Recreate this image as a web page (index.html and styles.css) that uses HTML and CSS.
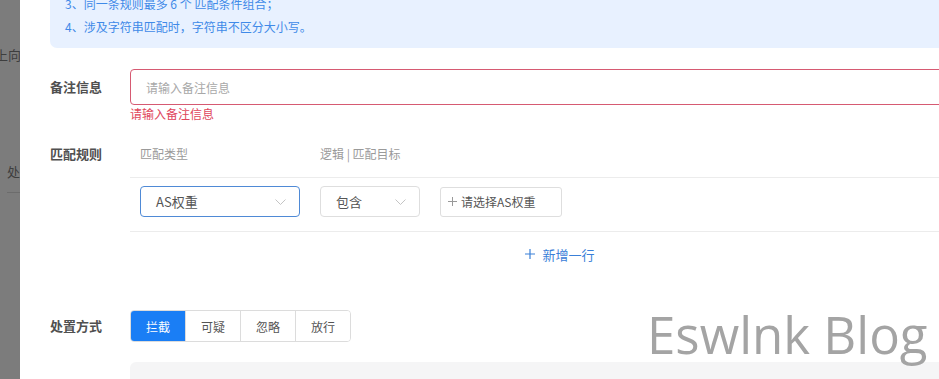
FILE: index.html
```html
<!DOCTYPE html>
<html lang="zh-CN">
<head>
    <meta charset="UTF-8">
    <meta name="viewport" content="width=device-width, initial-scale=1.0">
    <title>规则配置</title>
    <link rel="stylesheet" href="styles.css">
</head>
<body>
    <div class="page">
        <div class="backdrop">
            <div class="bd-text bd-top">上向</div>
            <div class="bd-text bd-mid">处</div>
        </div>

        <div class="drawer">
            <div class="tips">
                <p>3、同一条规则最多 6 个 匹配条件组合；</p>
                <p>4、涉及字符串匹配时，字符串不区分大小写。</p>
            </div>

            <div class="form-item item-remark">
                <label class="form-label">备注信息</label>
                <div class="form-control">
                    <input class="text-input is-error" type="text" placeholder="请输入备注信息">
                    <div class="error-msg">请输入备注信息</div>
                </div>
            </div>

            <div class="form-item item-rules">
                <label class="form-label">匹配规则</label>
                <div class="form-control">
                    <div class="rule-head">
                        <div class="col-type">匹配类型</div>
                        <div class="col-target">逻辑 | 匹配目标</div>
                    </div>
                    <div class="rule-row">
                        <div class="col-type">
                            <div class="select select-type is-focus">
                                <span>AS权重</span>
                                <svg class="arrow" width="11" height="6" viewBox="0 0 11 6"><polyline points="0.5,0.5 5.5,5.5 10.5,0.5" fill="none" stroke="#c4c4c4" stroke-width="1"/></svg>
                            </div>
                        </div>
                        <div class="col-target">
                            <div class="select select-logic">
                                <span>包含</span>
                                <svg class="arrow" width="11" height="6" viewBox="0 0 11 6"><polyline points="0.5,0.5 5.5,5.5 10.5,0.5" fill="none" stroke="#c4c4c4" stroke-width="1"/></svg>
                            </div>
                            <button class="pick-btn">
                                <svg width="9" height="9" viewBox="0 0 9 9"><path d="M4.5 0v9M0 4.5h9" stroke="#999" stroke-width="1"/></svg>
                                <span>请选择AS权重</span>
                            </button>
                        </div>
                    </div>
                    <div class="rule-add">
                        <svg width="10" height="10" viewBox="0 0 10 10"><path d="M5 0v10M0 5h10" stroke="#3a80d8" stroke-width="1.2"/></svg>
                        <span>新增一行</span>
                    </div>
                </div>
            </div>

            <div class="form-item item-action">
                <label class="form-label">处置方式</label>
                <div class="form-control">
                    <div class="btn-group">
                        <button class="active">拦截</button>
                        <button>可疑</button>
                        <button>忽略</button>
                        <button>放行</button>
                    </div>
                    <div class="gray-box"></div>
                </div>
            </div>
        </div>

        <div class="watermark">Eswlnk Blog</div>
    </div>
</body>
</html>
```

FILE: styles.css
```css
html, body {
    margin: 0;
    padding: 0;
    overflow: hidden;
}
body {
    font-family: "Noto Sans CJK SC", "Noto Sans", sans-serif;
    font-size: 12px;
    color: #555;
    background: #fff;
}
.page {
    position: relative;
    display: flex;
    height: 379px;
    width: 1000px;
    overflow: hidden;
}
.backdrop {
    width: 20px;
    flex-shrink: 0;
    background: #7c7c7c;
    overflow: hidden;
}
.bd-text {
    font-size: 13px;
    color: #3e3e3e;
    white-space: nowrap;
    line-height: 18px;
}
.bd-top {
    margin-top: 46px;
    margin-left: -5px;
}
.bd-mid {
    margin-top: 99px;
    margin-left: 7px;
    padding-bottom: 11px;
    border-bottom: 1px solid #6c6c6c;
}
.drawer {
    width: 940px;
    padding-left: 30px;
    flex-shrink: 0;
    background: #fff;
}
.tips {
    margin-top: -18px;
    padding: 10px 15px;
    background: #e8f1ff;
    border-radius: 7px;
    color: #3f8ae8;
}
.tips p {
    margin: 0;
    line-height: 23px;
}
.form-item {
    display: flex;
}
.form-label {
    width: 80px;
    flex-shrink: 0;
    font-size: 13px;
    font-weight: 700;
    color: #505050;
}
.form-control {
    flex: 1;
}
.item-remark {
    margin-top: 21px;
    margin-bottom: 7px;
}
.item-remark .form-label {
    line-height: 36px;
}
.text-input {
    box-sizing: border-box;
    width: 100%;
    height: 36px;
    padding: 0 15px;
    border: 1px solid #ddd;
    border-radius: 4px;
    font-family: inherit;
    font-size: 12px;
    outline: none;
}
.text-input::placeholder {
    color: #a8a8a8;
}
.text-input.is-error {
    border-color: #d65a72;
}
.error-msg {
    line-height: 18px;
    color: #e0465c;
}
.item-rules .form-label {
    line-height: 47px;
}
.rule-head {
    display: flex;
    height: 47px;
    line-height: 47px;
    color: #9a9a9a;
    border-bottom: 1px solid #ececec;
}
.col-type {
    width: 170px;
    padding-left: 10px;
}
.col-target {
    padding-left: 10px;
    display: flex;
    align-items: center;
}
.rule-row {
    display: flex;
    padding: 8px 0 14px;
    border-bottom: 1px solid #ececec;
}
.select {
    box-sizing: border-box;
    height: 31px;
    display: flex;
    align-items: center;
    justify-content: space-between;
    padding: 0 13px 0 15px;
    border: 1px solid #dedede;
    border-radius: 4px;
    font-size: 13px;
    color: #555;
    background: #fff;
}
.select-type {
    width: 160px;
}
.select-logic {
    width: 100px;
    margin-right: 20px;
}
.select.is-focus {
    border-color: #4f8ad6;
}
.pick-btn {
    box-sizing: border-box;
    width: 122px;
    height: 30px;
    display: flex;
    align-items: center;
    gap: 4px;
    padding: 0 0 0 7px;
    border: 1px solid #dedede;
    border-radius: 3px;
    background: #fff;
    font-family: inherit;
    font-size: 12px;
    color: #555;
}
.rule-add {
    height: 44px;
    display: flex;
    align-items: center;
    justify-content: center;
    gap: 7px;
    font-size: 13px;
    color: #3a80d8;
}
.item-action {
    margin-top: 34px;
}
.item-action .form-label {
    line-height: 32px;
}
.btn-group {
    display: inline-flex;
    border: 1px solid #dcdcdc;
    border-radius: 4px;
    overflow: hidden;
}
.btn-group button {
    width: 55px;
    height: 30px;
    border: none;
    border-right: 1px solid #dcdcdc;
    background: #fff;
    font-family: inherit;
    font-size: 12px;
    color: #555;
    padding: 0;
}
.btn-group button:last-child {
    width: 54px;
    border-right: none;
}
.btn-group button.active {
    background: #1a7ef5;
    color: #fff;
}
.gray-box {
    margin-top: 20px;
    height: 40px;
    background: #f5f5f6;
    border-radius: 6px 0 0 0;
}
.watermark {
    position: absolute;
    left: 647px;
    top: 299px;
    font-family: "Open Sans", "Noto Sans", sans-serif;
    font-size: 51px;
    color: #a4a4a4;
    white-space: nowrap;
    pointer-events: none;
}
```
